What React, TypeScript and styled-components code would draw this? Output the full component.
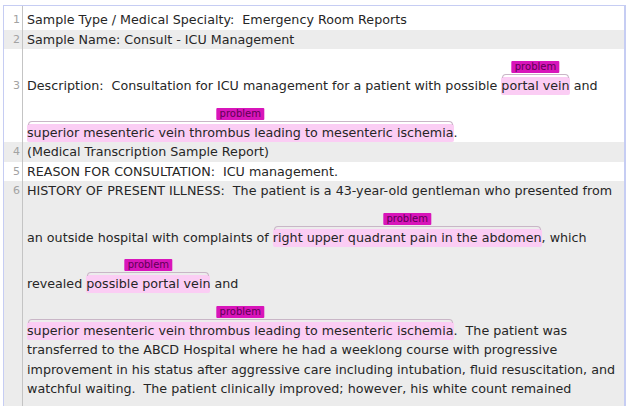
import React from "react";
import styled, { createGlobalStyle } from "styled-components";

type Seg = string | { ann: string };
type TextLine = Seg[];
type Sentence = { n: number; lines: TextLine[] };

const sentences: Sentence[] = [
  { n: 1, lines: [["Sample Type / Medical Specialty:  Emergency Room Reports"]] },
  { n: 2, lines: [["Sample Name: Consult - ICU Management"]] },
  {
    n: 3,
    lines: [
      ["Description:  Consultation for ICU management for a patient with possible ", { ann: "portal vein" }, " and"],
      [{ ann: "superior mesenteric vein thrombus leading to mesenteric ischemia" }, "."],
    ],
  },
  { n: 4, lines: [["(Medical Transcription Sample Report)"]] },
  { n: 5, lines: [["REASON FOR CONSULTATION:  ICU management."]] },
  {
    n: 6,
    lines: [
      ["HISTORY OF PRESENT ILLNESS:  The patient is a 43-year-old gentleman who presented from"],
      ["an outside hospital with complaints of ", { ann: "right upper quadrant pain in the abdomen" }, ", which"],
      ["revealed ", { ann: "possible portal vein" }, " and"],
      [{ ann: "superior mesenteric vein thrombus leading to mesenteric ischemia" }, ".  The patient was"],
      ["transferred to the ABCD Hospital where he had a weeklong course with progressive"],
      ["improvement in his status after aggressive care including intubation, fluid resuscitation, and"],
      ["watchful waiting.  The patient clinically improved; however, his white count remained"],
    ],
  },
];

const App: React.FC = () => {
  return (
    <>
      <GlobalStyle />
      <Panel>
        {sentences.map((s, si) => (
          <SentenceRow key={s.n} $alt={s.n % 2 === 0}>
            {s.lines.map((line, li) => {
              const annotated = line.some((seg) => typeof seg !== "string");
              const pad = (annotated ? 27 : 0) + (si === 0 && li === 0 ? 4 : 0);
              return (
                <Line key={li}>
                  <Gutter $pad={pad}>{li === 0 ? s.n : ""}</Gutter>
                  <LineText $pad={pad}>
                    {line.map((seg, k) =>
                      typeof seg === "string" ? (
                        <React.Fragment key={k}>{seg}</React.Fragment>
                      ) : (
                        <Entity key={k}>
                          <Label>problem</Label>
                          <Brace />
                          {seg.ann}
                        </Entity>
                      )
                    )}
                  </LineText>
                </Line>
              );
            })}
            {si === sentences.length - 1 && (
              <Line>
                <Gutter $pad={7} />
              </Line>
            )}
          </SentenceRow>
        ))}
      </Panel>
    </>
  );
};

const GlobalStyle = createGlobalStyle`
  html, body {
    margin: 0;
    padding: 0;
    background: #ffffff;
  }
  body {
    font-family: "DejaVu Sans", Verdana, sans-serif;
  }
`;

const Panel = styled.div`
  margin: 5px 0 0 3px;
  width: 620px;
  border: 1px solid #c6cdf3;
  border-bottom: none;
  border-right-width: 2px;
  overflow: hidden;
`;

const SentenceRow = styled.div<{ $alt: boolean }>`
  background: ${(p) => (p.$alt ? "#ececec" : "#ffffff")};
`;

const Line = styled.div`
  display: flex;
  align-items: stretch;
`;

const Gutter = styled.div<{ $pad?: number }>`
  flex: 0 0 16px;
  padding: ${(p) => p.$pad || 0}px 2px 0 0;
  border-right: 1px solid #c4c4c4;
  text-align: right;
  font-size: 11px;
  line-height: 19.5px;
  color: #a2a2a2;
`;

const LineText = styled.div<{ $pad: number }>`
  flex: 1;
  padding: ${(p) => p.$pad}px 0 0 4px;
  font-size: 12.7px;
  line-height: 19.5px;
  color: #262626;
  white-space: pre;
`;

const Entity = styled.span`
  position: relative;
  display: inline-block;
  height: 18px;
  line-height: 18px;
  background: #fbcdf4;
  border-radius: 2px;
`;

const Label = styled.span`
  position: absolute;
  left: 50%;
  bottom: calc(100% + 4px);
  transform: translateX(-50%);
  padding: 0 3px;
  height: 12px;
  line-height: 12px;
  font-size: 10px;
  background: #d815ba;
  color: #5e0055;
  border-radius: 1px;
`;

const Brace = styled.span`
  position: absolute;
  left: 1px;
  right: 1px;
  top: -3px;
  height: 3px;
  border: 1px solid #c9b6c7;
  border-bottom: none;
  border-radius: 4px 4px 0 0;
`;

export default App;
